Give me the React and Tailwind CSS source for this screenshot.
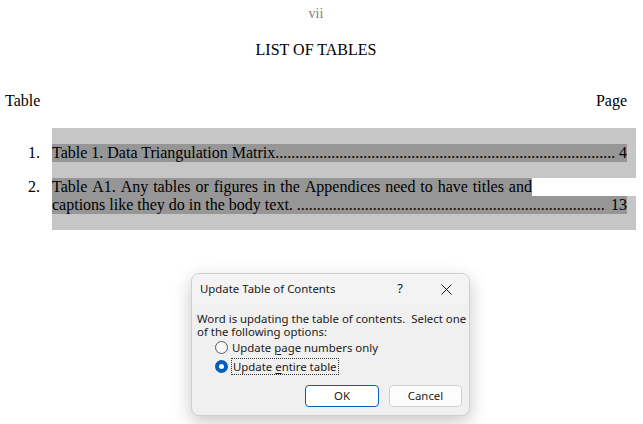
import React from "react";

function Leader({ children, page, dots, className = "" }) {
  return (
    <div className={"flex h-[18px] leading-[18px] bg-[#969696] overflow-hidden " + className}>
      <span className="whitespace-nowrap">{children}</span>
      <span className="flex-1 min-w-0 overflow-hidden whitespace-nowrap">{".".repeat(dots)}</span>
      <span className="whitespace-nowrap pl-[4px]">{page}</span>
    </div>
  );
}

function Radio({ checked }) {
  if (checked) {
    return (
      <span className="w-[13px] h-[13px] rounded-full bg-[#005fb8] flex items-center justify-center shrink-0">
        <span className="w-[5px] h-[5px] rounded-full bg-white" />
      </span>
    );
  }
  return <span className="w-[13px] h-[13px] rounded-full border border-[#5d5d5d] bg-[#f7f7f7] shrink-0" />;
}

export default function App() {
  return (
    <div className="relative w-[643px] h-[424px] overflow-hidden bg-white text-black text-[16px] font-['Liberation_Serif',serif]">
      <div className="w-[627px] pl-[5px]">
        <div className="pt-[5px] leading-[18px] text-center text-[14px] text-[#7f7f7f]">vii</div>
        <div className="mt-[18px] leading-[18px] text-center">LIST OF TABLES</div>
        <div className="mt-[33px] leading-[18px] flex justify-between">
          <span>Table</span>
          <span>Page</span>
        </div>
      </div>

      <div className="mt-[18px] flex">
        <div className="w-[52px] pl-[28px] pt-[16px] flex flex-col gap-[16px] leading-[18px]">
          <div className="h-[18px]">1.</div>
          <div className="h-[36px]">2.</div>
        </div>
        <div className="w-[584px] bg-[#c6c6c6] pt-[16px] pb-[16px] flex flex-col gap-[16px]">
          <Leader page="4" dots={85} className="w-[575px]">Table 1. Data Triangulation Matrix</Leader>
          <div className="flex flex-col">
            <div className="flex h-[18px] leading-[18px]">
              <span className="bg-[#969696] whitespace-nowrap w-[480px] flex justify-between">
                <span>Table</span><span>A1.</span><span>Any</span><span>tables</span><span>or</span><span>figures</span><span>in</span><span>the</span><span>Appendices</span><span>need</span><span>to</span><span>have</span><span>titles</span><span>and</span>
              </span>
              <span className="flex-1 bg-white" />
            </div>
            <Leader page="13" dots={77} className="w-[575px]">captions like they do in the body text.&nbsp;</Leader>
          </div>
        </div>
      </div>

      <div className="absolute left-[191px] top-[273px] w-[279px] h-[143px] rounded-[8px] border border-[#cfcfcf] bg-[#f0f0f0] shadow-[0_6px_18px_rgba(0,0,0,0.22)] overflow-hidden font-['Noto_Sans',sans-serif] text-[11.4px] text-[#1a1a1a]">
        <div className="h-[30px] bg-[#f3f3f3] flex items-center">
          <div className="pl-[8px] flex-1 leading-[16px] whitespace-nowrap">Update Table of Contents</div>
          <div className="w-[46px] h-[30px] flex items-center justify-center text-[13px]">?</div>
          <div className="w-[46px] h-[30px] flex items-center justify-center">
            <svg width="11" height="11" viewBox="0 0 11 11">
              <path d="M0.5 0.5 L10.5 10.5 M10.5 0.5 L0.5 10.5" stroke="#1a1a1a" strokeWidth="1" fill="none" />
            </svg>
          </div>
        </div>
        <div className="pl-[5px] pt-[8px] leading-[13px] whitespace-nowrap">
          <div>Word is updating the table of contents.&nbsp; Select one</div>
          <div>of the following options:</div>
        </div>
        <div className="pl-[23px] flex flex-col whitespace-nowrap">
          <div className="h-[19px] flex items-center gap-[4px]">
            <Radio />
            <span className="leading-[16px]">
              Update <span className="underline underline-offset-2">p</span>age numbers only
            </span>
          </div>
          <div className="h-[19px] flex items-center gap-[3px]">
            <Radio checked />
            <span className="leading-[15px] border border-dotted border-[#333] px-[1px]">
              Update <span className="underline underline-offset-2">e</span>ntire table
            </span>
          </div>
        </div>
        <div className="mt-[9px] pr-[7px] flex justify-end gap-[10px]">
          <div className="w-[74px] h-[22px] rounded-[4px] border border-[#005fb8] bg-white flex items-center justify-center">OK</div>
          <div className="w-[73px] h-[22px] rounded-[4px] border border-[#d0d0d0] bg-[#fdfdfd] flex items-center justify-center">Cancel</div>
        </div>
      </div>
    </div>
  );
}
